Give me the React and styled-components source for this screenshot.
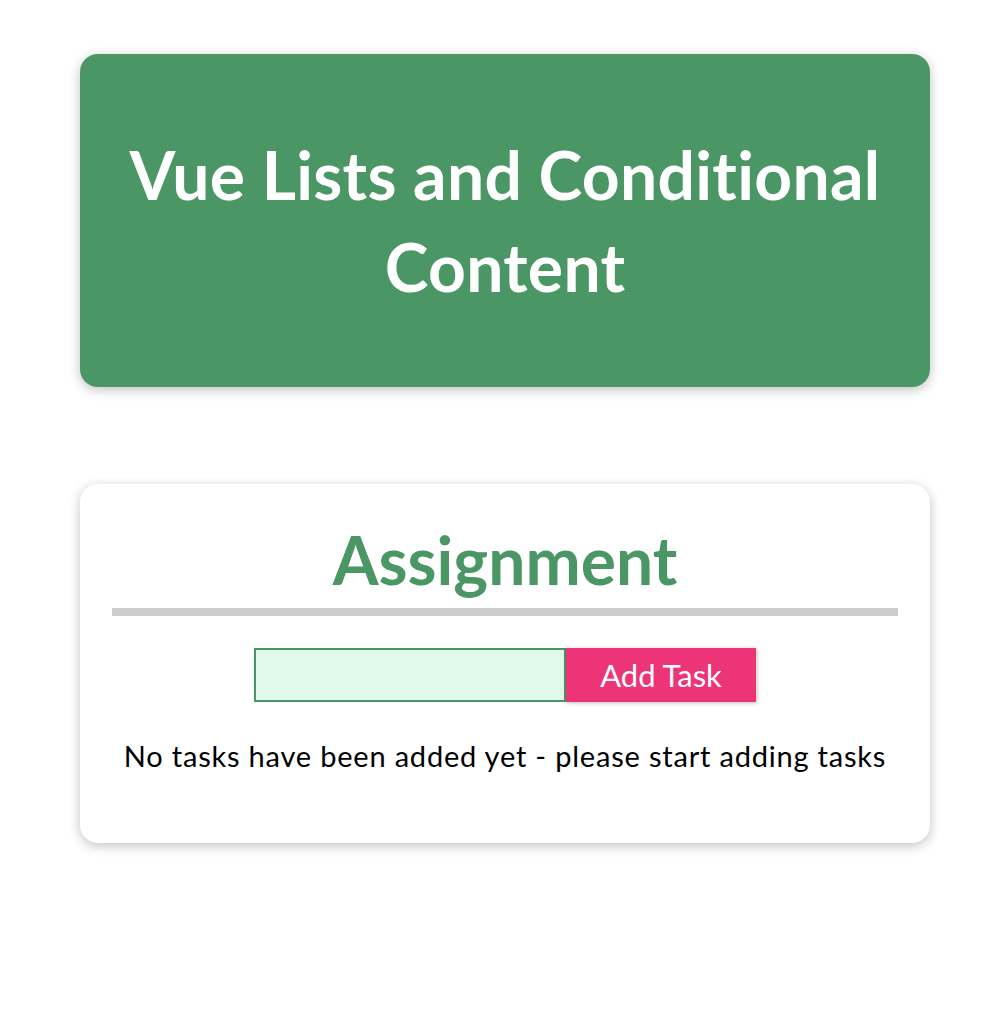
import React, { useState } from 'react';
import styled, { createGlobalStyle } from 'styled-components';

const GlobalStyle = createGlobalStyle`
    html {
        font-family: Lato, 'Noto Sans', sans-serif;
    }
    body {
        margin: 0;
        background: #fff;
    }
`;

const App = () => {
    const [enteredTask, setEnteredTask] = useState('');
    const [tasks, setTasks] = useState([]);

    const addTask = () => {
        if (!enteredTask.trim()) return;
        setTasks([...tasks, enteredTask]);
        setEnteredTask('');
    };

    return (
        <Page>
            <GlobalStyle />
            <Header>
                <Title>Vue Lists and Conditional Content</Title>
            </Header>
            <Card>
                <Heading>Assignment</Heading>
                <Controls>
                    <TaskInput
                        type="text"
                        value={enteredTask}
                        onChange={(e) => setEnteredTask(e.target.value)}
                    />
                    <AddButton onClick={addTask}>Add Task</AddButton>
                </Controls>
                {tasks.length === 0
                    ? <Empty>No tasks have been added yet - please start adding tasks</Empty>
                    : <TaskList>{tasks.map((t, i) => <li key={i}>{t}</li>)}</TaskList>}
            </Card>
        </Page>
    );
};

const Page = styled.div`
    display: flex;
    flex-direction: column;
    gap: 97px;
    padding: 54px 0 100px 80px;
`;

const Header = styled.header`
    box-sizing: border-box;
    width: 850px;
    height: 333px;
    display: flex;
    align-items: center;
    justify-content: center;
    padding: 0 24px;
    border-radius: 18px;
    background-color: #4a9664;
    color: #fff;
    text-align: center;
    box-shadow: 0 3px 12px rgba(0, 0, 0, 0.24);
`;

const Title = styled.h1`
    margin: 0;
    font-size: 66px;
    font-weight: 700;
    line-height: 92px;
    letter-spacing: 0.3px;
`;

const Card = styled.section`
    box-sizing: border-box;
    width: 850px;
    height: 359px;
    padding: 32px 32px 0;
    border-radius: 18px;
    background: #fff;
    text-align: center;
    box-shadow: 0 3px 12px rgba(0, 0, 0, 0.24);
`;

const Heading = styled.h2`
    margin: 0;
    padding-bottom: 4px;
    font-size: 66px;
    font-weight: 700;
    line-height: 88px;
    color: #4a9664;
    border-bottom: 8px solid #ccc;
`;

const Controls = styled.div`
    display: flex;
    justify-content: center;
    margin-top: 32px;
`;

const TaskInput = styled.input`
    box-sizing: border-box;
    width: 312px;
    height: 54px;
    margin: 0;
    border: 2px solid #4a9664;
    background: #dff9ea;
    font: inherit;
    font-size: 28px;
    outline: none;
`;

const AddButton = styled.button`
    box-sizing: border-box;
    width: 190px;
    height: 54px;
    border: none;
    background: #ec3477;
    color: #fff;
    font: inherit;
    font-size: 31px;
    cursor: pointer;
    box-shadow: 1px 1px 4px rgba(0, 0, 0, 0.26);
`;

const Empty = styled.p`
    margin: 34px 0 0;
    font-size: 29px;
    line-height: 40px;
    letter-spacing: 0.8px;
    color: #000;
`;

const TaskList = styled.ul`
    margin: 34px 0 0;
    padding: 0;
    list-style: none;
    font-size: 29px;
`;

export default App;
